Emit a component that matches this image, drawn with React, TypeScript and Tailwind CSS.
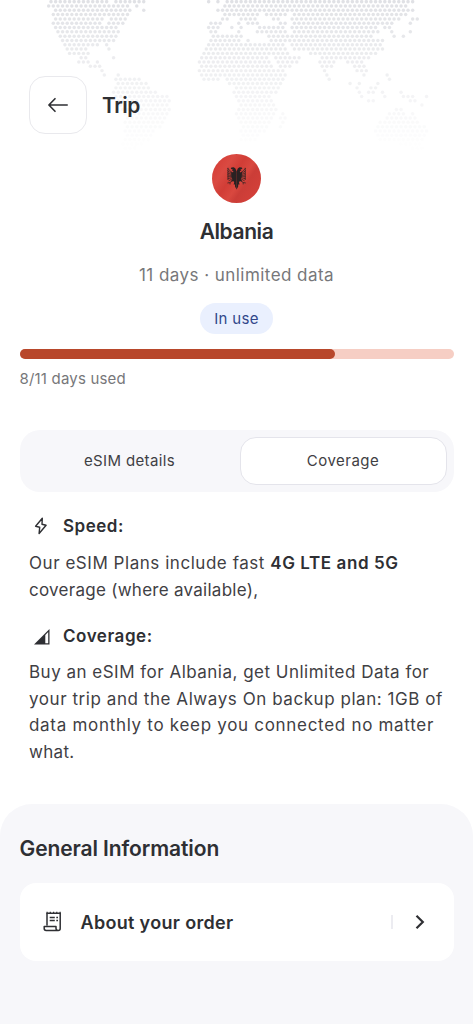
import React, { useState } from "react";

// [start, end] dot runs per row, three units per pixel
const MAP_ROWS: number[][][] = [
  [[153, 320], [348, 432], [627, 627], [655, 655], [682, 1238]],
  [[146, 380], [411, 411], [675, 1221]],
  [[167, 390], [431, 431], [660, 1238]],
  [[160, 385], [668, 777], [799, 858], [884, 1219]],
  [[167, 305], [335, 376], [668, 682], [721, 767], [819, 834], [877, 1190], [1238, 1252]],
  [[160, 300], [328, 368], [634, 662], [716, 716], [744, 771], [841, 854], [884, 1177], [1231, 1231]],
  [[167, 350], [627, 655], [695, 695], [723, 723], [777, 854], [877, 1099], [1114, 1128], [1154, 1168]],
  [[174, 348], [634, 648], [716, 716], [771, 854], [884, 1090], [1103, 1133], [1175, 1175], [1231, 1231]],
  [[181, 341], [641, 720], [807, 1117], [1182, 1182], [1210, 1210]],
  [[188, 334], [634, 717], [744, 744], [811, 1147]],
  [[195, 292], [320, 320], [627, 854], [877, 1144]],
  [[202, 260], [327, 327], [620, 794], [814, 861], [884, 1149]],
  [[209, 265], [613, 804], [821, 864], [932, 1131]],
  [[244, 258], [341, 341], [606, 800], [827, 899], [967, 1104]],
  [[237, 265], [292, 292], [600, 811], [834, 889], [959, 1001], [1044, 1087]],
  [[272, 300], [606, 820], [841, 871], [967, 1001], [1064, 1092]],
  [[306, 306], [600, 828], [849, 849], [973, 973], [1072, 1099]],
  [[313, 313], [355, 355], [606, 837], [855, 855], [980, 980], [1092, 1092], [1161, 1161]],
  [[348, 418], [613, 650], [675, 850], [987, 987], [1168, 1168]],
  [[355, 438], [690, 843], [1050, 1050], [1078, 1078], [1134, 1134]],
  [[348, 446], [709, 836], [1072, 1072], [1112, 1126]],
  [[341, 467], [702, 829], [1078, 1078], [1106, 1120], [1147, 1147], [1203, 1203]],
  [[348, 502], [709, 808], [1085, 1085], [1154, 1154], [1210, 1238], [1279, 1279]],
  [[355, 508], [716, 815], [1106, 1120], [1231, 1245]],
  [[362, 502], [720, 822], [1265, 1265]],
  [[369, 502], [716, 822], [1189, 1203]],
  [[376, 495], [709, 815], [848, 848], [1169, 1211], [1238, 1238]],
  [[383, 488], [716, 808], [841, 855], [1162, 1245]],
  [[376, 480], [723, 802], [848, 848], [1141, 1252]],
  [[383, 474], [730, 800], [841, 841], [1134, 1274]],
  [[376, 460], [723, 788], [1127, 1281]],
  [[376, 455], [730, 775], [1130, 1274]],
  [[369, 440], [730, 765], [1134, 1264]],
  [[369, 420], [1204, 1260]],
  [[376, 405], [1240, 1270]],
];

const STEP = 13.91;

const WorldMap = () => {
  const dots: React.ReactNode[] = [];
  MAP_ROWS.forEach((runs, row) => {
    const offset = row % 2 === 0 ? 153 : 146;
    runs.forEach(([start, end]) => {
      const first = Math.round((start - offset) / STEP);
      const last = Math.round((end - offset) / STEP);
      for (let col = first; col <= last; col++) {
        dots.push(
          <circle
            key={`${row}-${col}`}
            cx={offset + col * STEP}
            cy={5 + row * 12.93}
            r="5.2"
            opacity={Math.max(0.04, 1 - row / 34)}
          />
        );
      }
    });
  });
  return (
    <svg
      className="absolute top-0 left-0 w-[473px] h-[150px] fill-[#e0e1e5]"
      viewBox="0 0 1419 450"
    >
      {dots}
    </svg>
  );
};

// left half of the eagle, mirrored for the right one
const EagleHalf = () => (
  <g>
    <path
      fill="#2a2122"
      d="M24.6 17.6 23.4 14.4 21.8 13.2 19.4 13.6 18.8 14.9 20.8 15.2 19.8 16.5 21.4 17 21 18.6 19.2 17.6 19.4 22.6 20.4 25.2 19 27 21.6 27.2 22.2 28.4 21.6 30.6 23 30.4 23 32.4 24.6 35.4Z"
    />
    <path
      stroke="#2a2122"
      strokeWidth=".9"
      opacity=".8"
      fill="none"
      d="M19.8 18.6 15.6 14.2M19.8 19.6 15.4 16.6M19.8 20.6 15.3 18.8M19.8 21.6 15.3 20.8M20 22.6 15.4 22.8M20.2 23.6 15.6 24.8M20.8 24.6 16.6 26.8M20.8 26.8 17.6 28.6 15.4 29M18 28.4V30.4M16 13.8V26"
    />
  </g>
);

const Flag = () => (
  <svg className="w-[49px] h-[49px]" viewBox="0 0 49 49">
    <defs>
      <linearGradient id="flag" x1="0" y1="0.15" x2="1" y2="0.85">
        <stop offset="0" stopColor="#d53c35" />
        <stop offset="0.25" stopColor="#da4a42" />
        <stop offset="0.42" stopColor="#d13d36" />
        <stop offset="0.58" stopColor="#d9483f" />
        <stop offset="0.68" stopColor="#cb3d37" />
        <stop offset="1" stopColor="#d6413a" />
      </linearGradient>
    </defs>
    <circle cx="24.5" cy="24.5" r="24.5" fill="url(#flag)" />
    <EagleHalf />
    <g transform="translate(49.2 0) scale(-1 1)">
      <EagleHalf />
    </g>
  </svg>
);

const ReceiptIcon = () => (
  <svg
    className="-ml-px w-[19px] h-[21px]"
    viewBox="0 0 19 21"
    fill="none"
    stroke="#2e2f33"
    strokeWidth="1.5"
    strokeLinejoin="round"
  >
    <path d="M4 14.5V2.2H17.2V17.4a2 2 0 0 1-2 2H3.1a1.9 1.9 0 0 1-1.9-1.9V15.6H13V17.3a2 2 0 0 0 2.1 2.1" />
    <path d="M4.1 .8V3M7.3 .8V3M10.6 .8V3M13.8 .8V3M17.1 .8V3" strokeWidth="1.2" />
    <path d="M6.7 6.4H11.8M6.7 9.6H11.8M13.3 6.4H15M13.3 9.6H15" />
  </svg>
);

const App = () => {
  const [tab, setTab] = useState("coverage");
  const used = 8;
  const total = 11;
  const active = "bg-white border border-[#e4e4eb]";

  return (
    <main className="relative flex flex-col w-[473px] h-[1024px] overflow-hidden bg-white text-[#3f4044] font-['Inter',sans-serif] whitespace-nowrap">
      <WorldMap />

      {/* header */}
      <header className="relative flex items-center pl-[29px] mt-[76.4px] h-[58px]">
        <button className="flex items-center justify-center w-[58px] h-[58px] bg-white rounded-2xl border-[1.5px] border-[#e9e9ed]">
          <svg className="w-5 h-4" viewBox="0 0 20 16" fill="none" stroke="#2e2f33" strokeWidth="1.6" strokeLinecap="round" strokeLinejoin="round">
            <path d="M19.2 8H1M7 1.7 .9 8 7 14.3" />
          </svg>
        </button>
        <h1 className="ml-[15px] text-[21px] font-semibold tracking-[-0.5px] text-[#2e2f33]">Trip</h1>
      </header>

      {/* plan summary */}
      <section className="relative flex flex-col items-center px-[19.5px] pt-[19.6px]">
        <Flag />
        <h2 className="mt-[15px] text-[21px] leading-7 font-semibold tracking-[-0.4px] text-[#2e2f33]">Albania</h2>
        <p className="mt-[15px] text-[17px] leading-7 tracking-[0.45px] text-[#77777a]">
          {total} days · unlimited data
        </p>
        <span className="mt-[14.4px] flex items-center justify-center w-[73px] h-[31px] rounded-full bg-[#eaf0fe] text-[15px] tracking-[0.35px] text-[#31478a]">
          In use
        </span>
        <div className="mt-[15px] w-[434px] h-[10px] rounded-full bg-[#f6cec4]">
          <div
            className="h-full rounded-full bg-[#b8472b]"
            style={{ width: `${(used / total) * 100}%` }}
          />
        </div>
        <p className="self-start mt-[8px] text-[15px] leading-6 tracking-[0.18px] text-[#77777a]">
          {used}/{total} days used
        </p>
      </section>

      {/* tabs */}
      <div className="flex mt-[38.6px] mx-[19.5px] h-[62px] py-[7px] pr-[7px] rounded-[20px] bg-[#f7f7fa] text-[15px]">
        <button
          onClick={() => setTab("details")}
          className={`flex-1 rounded-2xl tracking-[0.36px] ${tab === "details" ? active : ""}`}
        >
          eSIM details
        </button>
        <button
          onClick={() => setTab("coverage")}
          className={`w-[207px] rounded-2xl tracking-[0.5px] ${tab === "coverage" ? active : ""}`}
        >
          Coverage
        </button>
      </div>

      {/* coverage */}
      <section className="pl-[29px] pt-[21px]">
        <h3 className="flex items-center h-[27px] text-[17px] font-semibold tracking-[0.5px] text-[#2e2f33]">
          <svg className="ml-[5px] mr-[15px] w-[14px] h-[18px]" viewBox="0 0 14 18" fill="none" stroke="#2e2f33" strokeWidth="1.4" strokeLinejoin="round">
            <path d="M8.3 1.2 1.6 9.2 5.7 10.2 5.1 16.5 12.1 8.3 8 7.3Z" />
          </svg>
          Speed:
        </h3>
        <p className="mt-[10px] text-[17px] leading-[26.7px]">
          <span className="tracking-[0.54px]">Our eSIM Plans include fast </span>
          <b className="font-semibold tracking-[0.6px] text-[#2e2f33]">4G LTE and 5G</b>
          <br />
          <span className="tracking-[0.27px]">coverage (where available),</span>
        </p>
        <h3 className="flex items-center mt-5 h-[27px] text-[17px] font-semibold tracking-[0.55px] text-[#2e2f33]">
          <svg className="ml-[5px] mr-[13px] w-[16px] h-[16px]" viewBox="0 0 17 17">
            <path d="M0 16.5 16.5 0V16.5Z" fill="#2e2f33" />
            <path d="M12 6.4 15.1 3.3V15.1H12Z" fill="#fff" />
          </svg>
          Coverage:
        </h3>
        <p className="mt-[8.6px] text-[17px] leading-[26.7px]">
          <span className="tracking-[0.49px]">Buy an eSIM for Albania, get Unlimited Data for</span>
          <br />
          <span className="tracking-[0.56px]">your trip and the Always On backup plan: 1GB of</span>
          <br />
          <span className="tracking-[0.7px]">data monthly to keep you connected no matter</span>
          <br />
          <span className="tracking-[0.3px]">what.</span>
        </p>
      </section>

      {/* general information */}
      <section className="flex-1 mt-[38px] px-[19.5px] pt-[30px] rounded-t-[32px] bg-[#f7f7fa] text-[#2e2f33]">
        <h2 className="text-[21px] leading-[30px] font-semibold tracking-[-0.1px]">General Information</h2>
        <a className="flex items-center mt-[19px] h-[78px] pl-6 pr-[29px] rounded-2xl bg-white">
          <ReceiptIcon />
          <span className="ml-[19px] pt-px text-[18px] font-semibold tracking-[0.32px]">About your order</span>
          <span className="ml-auto w-[1.5px] h-[14px] bg-[#ececf1]" />
          <svg className="ml-[22px] w-[10px] h-4" viewBox="0 0 10 16" fill="none" stroke="#2e2f33" strokeWidth="2.2">
            <path d="M1.5 1.7 7.8 8 1.5 14.3" />
          </svg>
        </a>
      </section>
    </main>
  );
};

export default App;
